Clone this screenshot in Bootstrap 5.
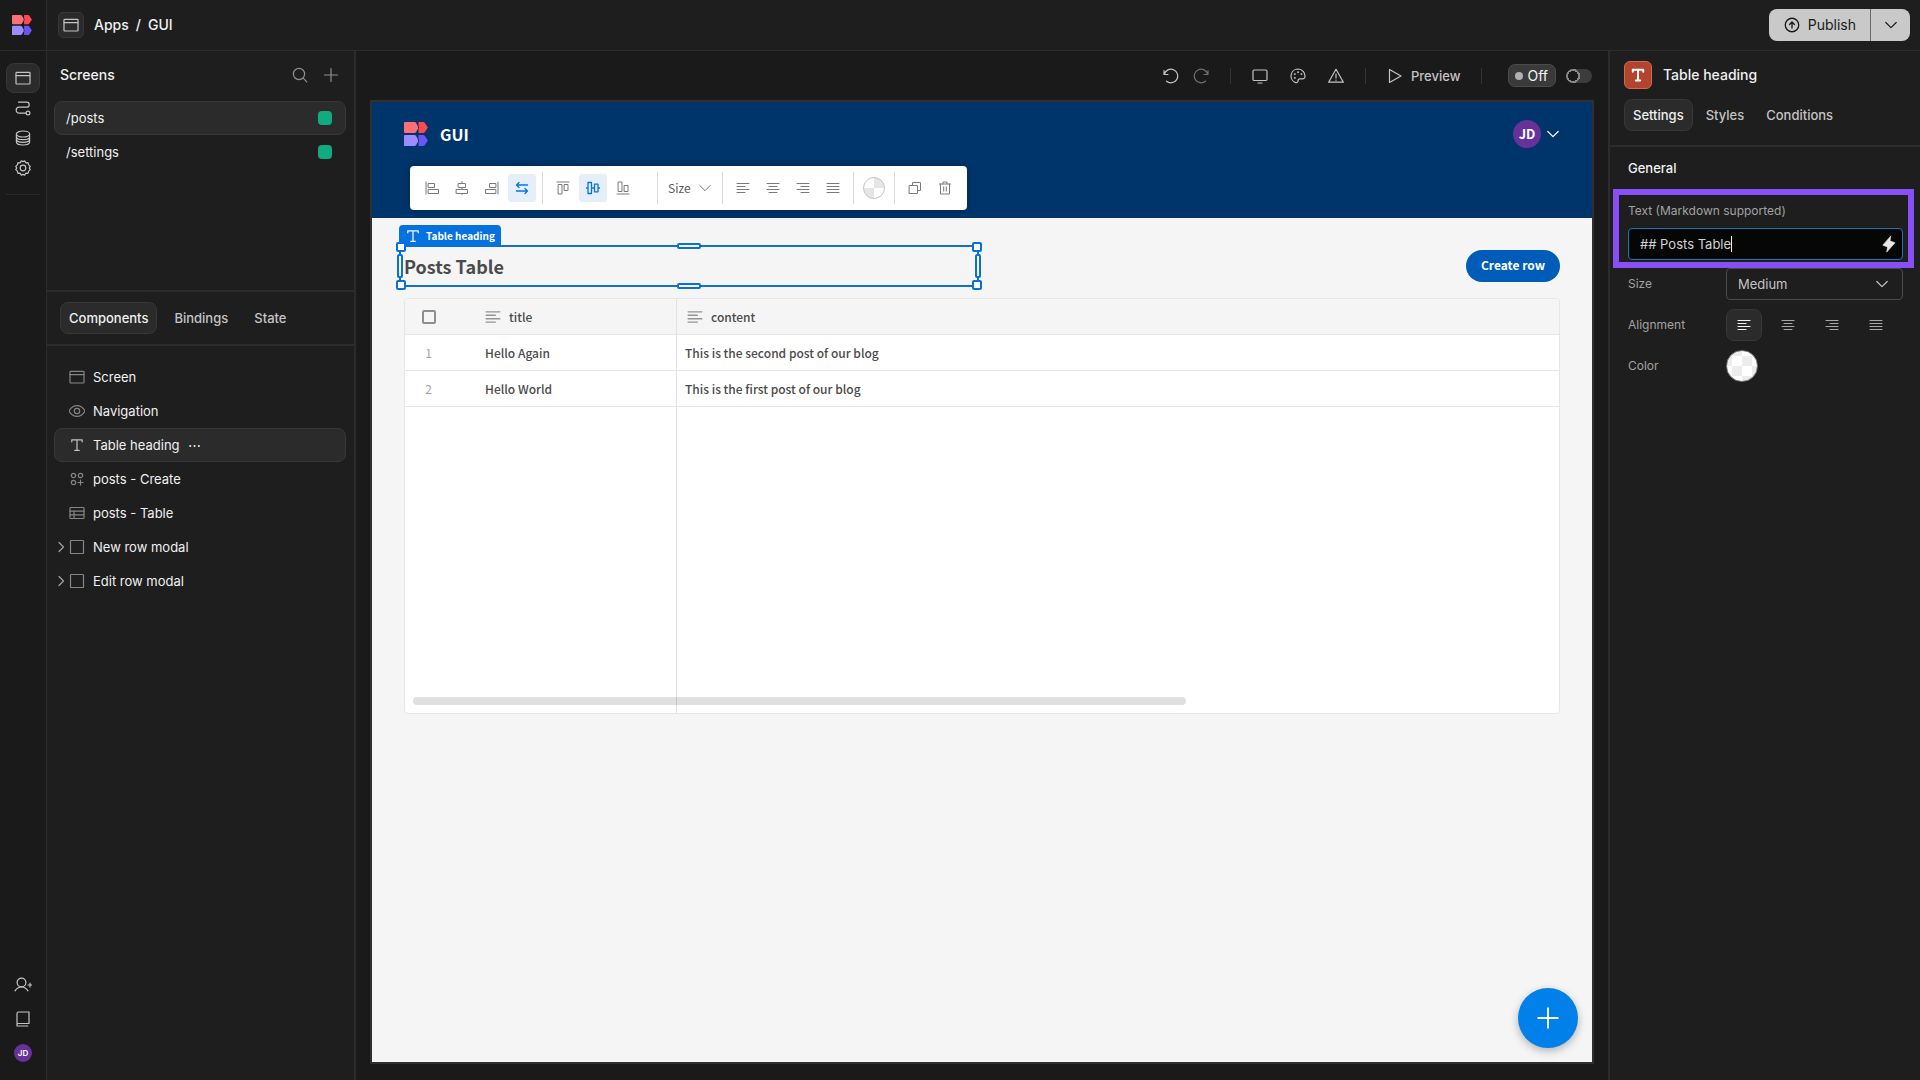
<!DOCTYPE html>
<html lang="en">
<head>
<meta charset="utf-8">
<meta name="viewport" content="width=device-width, initial-scale=1">
<title>GUI – Apps</title>
<link href="https://cdn.jsdelivr.net/npm/bootstrap@5.3.0/dist/css/bootstrap.min.css" rel="stylesheet">
<style>
  :root { --panel:#1e1e1e; --deep:#1a1a1a; --line:#2c2c2c; --raised:#2b2b2b; --edge:#383838; --txt:#f0f0f0; --dim:#c4c4c4; --mute:#a2a2a2; }
  body { font-family:Inter,"Noto Sans",sans-serif; font-size:13px; line-height:20px; color:var(--txt); background:var(--deep); }
  svg { display:block; flex:none; fill:none; stroke:currentColor; stroke-width:1.2; stroke-linecap:round; stroke-linejoin:round; }
  a { color:inherit; text-decoration:none; }
  button { border:0; background:none; color:inherit; padding:0; }
  h1, h2, p { margin:0; font-size:14px; line-height:20px; font-weight:500; }
  .i14 { width:14px; height:14px; } .i16 { width:16px; height:16px; } .i18 { width:18px; height:18px; } .i20 { width:20px; height:20px; } .i24 { width:24px; height:24px; }
  .min-h-0 { min-height:0; }

  .app-head { height:51px; background:var(--panel); border-bottom:1px solid var(--line); font-size:14px; }
  .rail-w { width:47px; border-right:1px solid var(--line); background:var(--deep); flex:none; }
  .crumbs { padding:0 10px 0 11px; }
  .crumb-box { width:26px; height:26px; margin-right:10px; border:1px solid var(--edge); border-radius:5px; background:var(--raised); color:var(--dim); }
  .crumb-sep { padding:0 7px; }
  .publish { height:32px; background:#c9c9c9; color:#1a1a1a; border-radius:8px; overflow:hidden; }
  .publish button + button { border-left:1px solid #6a6a6a; width:40px; }
  .publish button:first-child { padding:0 14px; gap:7px; }

  .rail-nav a { height:30px; width:34px; color:var(--dim); }
  .rail-nav a.active { background:var(--raised); border:1px solid var(--edge); border-radius:8px; }
  .rail-nav hr { width:100%; margin:11px 0 0; border-color:#555; }
  .rail-foot { gap:17px; padding-bottom:18px; color:var(--dim); }
  .ava { border-radius:50%; background:#66329a; color:#fff; font-weight:600; }
  .ava-s { width:18px; height:18px; font-size:8px; line-height:10px; }

  .left-panel { width:309px; flex:none; background:var(--panel); border-right:2px solid var(--line); }
  .screens { height:241px; border-bottom:2px solid var(--line); padding:14px 8px 0 7px; }
  .screens-head { padding:0 7px 16px 6px; gap:15px; color:#909090; }
  .screens-head h2 { color:var(--txt); }
  .rowitem { height:34px; border:1px solid transparent; border-radius:8px; padding:0 13px 0 11px; }
  .rowitem.active { background:var(--raised); border-color:var(--edge); }
  .dot-role { width:14px; height:14px; border-radius:4px; background:#10ab80; }
  .tabset { gap:8px; color:var(--dim); }
  .tabset button { height:32px; padding:0 8px; border:1px solid transparent; border-radius:8px; font-weight:500; }
  .tabset button.active { background:var(--raised); border-color:var(--edge); color:var(--txt); }
  .left-tabs { padding:10px 13px; border-bottom:2px solid var(--line); }
  .tree { padding:14px 8px 0 7px; }
  .tree .rowitem { padding:0 2px; gap:8px; }
  .tree .twist { width:9px; margin-right:-5px; color:var(--mute); }
  .tree .rowitem > svg { color:#858585; }
  .tree .active > svg { color:var(--dim); }

  .stage { padding:0 14px 16px 14px; }
  .stage-bar { height:49px; padding-right:2px; color:var(--dim); }
  .stage-bar .vr-line { width:1px; height:16px; background:#353535; margin:0 21px; }
  .history { gap:14px; } .tools { gap:22px; }
  .off-pill { height:23px; border:1px solid #4b4b4b; border-radius:7px; background:#3a3a3a; padding:0 7px 0 6px; gap:4px; color:#f4f4f4; margin:0 10px 0 5px; font-size:14px; }
  .off-pill i { width:8px; height:8px; border-radius:50%; background:#b0b0b0; }
  .flip { appearance:none; width:26px; height:14px; margin:0; border-radius:7px; background:radial-gradient(circle at 7px 7px,#1a1a1a 5px,#8a8a8a 5px,#8a8a8a 7px,#3c3c3c 7px); }

  .canvas { border:2px solid #303030; background:#f5f5f5; color:#4b4b4b; font-family:"Noto Sans CJK SC","Noto Sans",sans-serif; font-weight:500; font-size:12px; }
  .site-head { height:116px; background:#00356b; color:#fff; padding:18px 32px; }
  .site-id { height:28px; gap:12px; }
  .site-id h1 { font-size:16px; font-weight:700; }
  .site-user { height:28px; gap:5px; }
  .ava-m { width:28px; height:28px; font-size:13px; font-weight:700; }
  .site-body { padding:27px 32px; }
  .float-bar { left:38px; top:64px; height:44px; padding:0 8px; gap:2px; background:#fff; border-radius:4px; color:#7a7a7a; box-shadow:0 0 8px rgba(0,0,0,.3); z-index:3; }
  .float-bar button { width:28px; height:28px; border-radius:3px; }
  .float-bar svg { stroke-width:1; }
  .float-bar .on { background:#e5effa; color:#0b74d9; }
  .float-bar .on svg { stroke-width:1.3; }
  .float-bar .sep { width:1px; height:32px; background:#dcdcdc; margin:0 4px; }
  .float-bar .sep-wide { margin-left:18px; }
  .size-wrap { width:52px; }
  .size-wrap select { appearance:none; border:0; background:none; width:100%; padding:0 4px; font-size:12px; line-height:20px; font-weight:400; color:#5a5a5a; }
  .size-wrap svg { right:4px; top:3px; pointer-events:none; }
  .swatch { border-radius:50%; background:conic-gradient(#e6e6e6 25%,#fff 0 50%,#e6e6e6 0 75%,#fff 0); }
  .swatch-s { width:22px; height:22px; border:1px solid #c4c4c4; }

  .picked { width:580px; height:42px; margin-left:-5px; border:2px solid #1272c8; }
  .picked h2 { font-size:18px; line-height:38px; font-weight:700; padding-left:3px; color:#4b4b4b; }
  .tag { left:-2px; bottom:38px; height:22px; padding:0 6px; gap:5px; background:#0672e0; color:#fff; border-radius:4px 4px 0 0; font-size:10px; font-weight:700; white-space:nowrap; }
  .grip { position:absolute; background:#fff; border:2px solid #0672d8; border-radius:2px; width:10px; height:10px; }
  .g-w, .g-e { width:6px; height:24px; top:7px; } .g-n, .g-s { width:24px; height:6px; left:276px; }
  .g-nw, .g-ne { top:-5px; } .g-sw, .g-se { bottom:-5px; } .g-nw, .g-sw { left:-5px; } .g-ne, .g-se { right:-5px; }
  .g-w { left:-4px; } .g-e { right:-4px; } .g-n { top:-4px; } .g-s { bottom:-4px; }
  .create { height:32px; padding:0 15px 2px; border-radius:16px; background:#005cb9; color:#fff; font-size:12px; font-weight:700; }

  .grid-box { height:416px; margin-top:11px; border:1px solid #e6e6e6; border-radius:4px; background:#fff; overflow:hidden; }
  .grid-box table { width:100%; height:100%; border-collapse:separate; border-spacing:0; table-layout:fixed; }
  .grid-box th, .grid-box td { height:36px; padding:0 8px; border-bottom:1px solid #e6e6e6; font-weight:500; line-height:20px; }
  .grid-box th { background:#f5f5f5; padding:0 10px; }
  .grid-box th svg { color:#949494; }
  .grid-box tr > :nth-child(2) { border-right:1px solid #e2e2e2; padding-left:33px; }
  .grid-box .num { width:47px; color:#a4a4a4; text-align:center; padding:0; font-weight:400; }
  .grid-box .fill td { height:auto; border-bottom:0; }
  .grid-box .ttl { width:225px; }
  .tick { appearance:none; display:block; width:14px; height:14px; margin:0 auto; border:2px solid #8e8e8e; border-radius:2px; }
  .scroller { left:8px; bottom:8px; width:67%; height:8px; border-radius:4px; background:rgba(0,0,0,.12); }
  .fab { right:14px; bottom:14px; width:60px; height:60px; border-radius:50%; background:#0080e8; color:#fff; box-shadow:0 3px 8px rgba(0,0,0,.28); }

  .right-panel { width:312px; flex:none; background:var(--panel); border-left:2px solid var(--line); }
  .insp-head { padding:10px 14px 14px; border-bottom:2px solid var(--line); }
  .insp-title { gap:11px; margin-bottom:10px; }
  .insp-head .tabset { gap:4px; }
  .type-box { width:28px; height:28px; border-radius:6px; background:#b4432d; border:1px solid #cf6a55; color:#fff; }
  .type-box svg { stroke-width:2; }
  .insp-body { padding:11px 17px 0 18px; }
  .insp-body h2 { font-size:13px; }
  .insp-body label, .lbl { font-size:12px; line-height:16px; color:var(--mute); }
  .lbl { width:98px; flex:none; }
  .marked { padding-top:25px; margin-bottom:8px; }
  .marked label { margin-bottom:9px; }
  .marked::after { content:""; position:absolute; left:-15px; right:-11px; top:11px; bottom:-8px; border:6px solid #874ff5; pointer-events:none; z-index:2; }
  .fld { height:32px; width:100%; border-radius:4px; border:1px solid #4a4a4a; background:var(--panel); color:var(--dim); padding:0 11px; appearance:none; outline:0; }
  .fld-on { background:#060606; border-color:#1b75b5; color:#d2d2d2; }
  .caret { left:103px; top:8px; width:1px; height:16px; background:#eee; }
  .bolt { right:5px; top:7px; color:#e8e8e8; } .drop { right:14px; top:9px; color:var(--dim); pointer-events:none; }
  .opt-rows { display:grid; gap:9px; }
  .opt-rows > div { height:32px; }
  .aligns { gap:8px; color:#a8a8a8; }
  .aligns button { width:36px; height:32px; border:1px solid transparent; border-radius:8px; }
  .aligns .active { background:var(--raised); border-color:var(--edge); color:#f4f4f4; }
  .swatch-l { width:32px; height:32px; border:1px solid #777; background:repeating-conic-gradient(#ececec 0 25%,#fff 0 50%) 5px 5px/20px 20px; }
</style>
</head>
<body class="vh-100 d-flex flex-column overflow-hidden">

<svg width="0" height="0" class="position-absolute" aria-hidden="true">
  <symbol id="logo" viewBox="0 0 24 24"><g stroke="none"><path fill="#ff6f76" d="M0 1Q0 0 1 0H10.500Q11.500 0 12 .8L14 4.500V6.500L12 10.200Q11.500 11 10.500 11H1Q0 11 0 10z"/><path fill="#ff4852" d="M14.500 0H19.500Q20.300 0 20.700.7L23.600 5Q24 5.500 23.600 6L20.700 10.300Q20.300 11 19.500 11H14.500V6.800L15.200 5.500L14.500 4.200z"/><path fill="#9b8cff" d="M0 14Q0 13 1 13H10.500Q11.500 13 12 13.800L14 17.500V19.500L12 23.200Q11.500 24 10.500 24H0z"/><path fill="#6a55f5" d="M14.500 13H19.500Q20.300 13 20.700 13.700L23.600 18Q24 18.500 23.600 19L20.700 23.300Q20.300 24 19.500 24H14.500V19.800L15.200 18.500L14.500 17.200z"/></g></symbol>
  <symbol id="win" viewBox="0 0 16 16"><rect x="1" y="2.300" width="14" height="11.700" rx=".8"/><path d="M1 5.600h14"/></symbol>
  <symbol id="flow" viewBox="0 0 16 16"><path d="M3.500 2.200h8.200a2.400 2.400 0 0 1 0 5H4.200a3 3 0 0 0 0 6h6.600"/><circle cx="13" cy="13" r="1.900"/></symbol>
  <symbol id="db" viewBox="0 0 16 16"><ellipse cx="8" cy="4" rx="6.600" ry="3"/><path d="M1.400 4v8c0 1.700 3 3 6.600 3s6.600-1.300 6.600-3V4M1.400 6.700c0 1.700 3 3 6.600 3s6.600-1.300 6.600-3M1.400 9.300c0 1.700 3 3 6.600 3s6.600-1.300 6.600-3"/></symbol>
  <symbol id="gear" viewBox="0 0 16 16"><circle cx="8" cy="8" r="2.800"/><path d="M6.300.9 5.200 2.800 3 2.700 2.300 4.900.8 6.400 1.700 8 .8 9.600 2.300 11.100 3 13.300 5.200 13.200 6.300 15.100 8 14.400 9.700 15.100 10.800 13.200 13 13.300 13.700 11.100 15.200 9.600 14.300 8 15.200 6.400 13.700 4.900 13 2.700 10.800 2.800 9.700.9 8 1.600z"/></symbol>
  <symbol id="useradd" viewBox="0 0 18 18"><circle cx="7.500" cy="6.500" r="4.400"/><path d="M1 14.800Q3.500 11 7.500 11T14 14.800M14 9h4M16 7v4"/></symbol>
  <symbol id="book" viewBox="0 0 16 16"><path d="M2 13.500V2.500Q2 1 3.500 1H14v11.500H3.200Q2 12.500 2 14v1h10.800"/></symbol>
  <symbol id="find" viewBox="0 0 16 16"><circle cx="7" cy="7" r="5.600"/><path d="m11.200 11.200 3.600 3.600"/></symbol>
  <symbol id="plus" viewBox="0 0 16 16"><path d="M8 1.500v13M1.500 8h13"/></symbol>
  <symbol id="eye" viewBox="0 0 16 16"><path d="M0 8Q3 2.700 8 2.700T16 8Q13 13.300 8 13.300T0 8z"/><circle cx="8" cy="8" r="2.700"/></symbol>
  <symbol id="tee" viewBox="0 0 16 16"><path d="M2.800 4.800V2.800h10.400v2M8 2.800v10.600M5.800 13.400h4.400"/></symbol>
  <symbol id="shapes" viewBox="0 0 16 16"><circle cx="4.500" cy="4.500" r="2.200"/><circle cx="11.500" cy="4.500" r="2.200"/><circle cx="4.500" cy="11.500" r="2.200"/><path d="M11.500 9v5M9 11.500h5"/></symbol>
  <symbol id="tbl" viewBox="0 0 16 16"><rect x="1" y="2.500" width="14" height="11" rx=".8"/><path d="M1 6.200h14M1 9.800h14M5 6.200v7.300"/></symbol>
  <symbol id="sq" viewBox="0 0 16 16"><rect x="1.500" y="1.500" width="13" height="13" rx=".6"/></symbol>
  <symbol id="right" viewBox="0 0 8 12"><path d="m2 1.500 4.500 4.500L2 10.500"/></symbol>
  <symbol id="down" viewBox="0 0 14 14"><path d="m1.800 4.500 5.200 5.200 5.200-5.200"/></symbol>
  <symbol id="undo" viewBox="0 0 16 16"><path d="M1 2.500v4h4M1.300 6.300A6.800 6.800 0 1 1 3.500 13.200"/></symbol>
  <symbol id="desk" viewBox="0 0 16 16"><rect x="1" y="2" width="14" height="10.500" rx="1.200"/><path d="M6 15h4"/></symbol>
  <symbol id="pal" viewBox="0 0 16 16"><path d="M8 1a7 7 0 0 0-2.300 13.600c1.300.4 2.300-.5 2.300-1.700a2 2 0 0 1 2-2h2.700c1 0 1.800-.6 2.100-1.500A7 7 0 0 0 8 1z"/><g fill="currentColor" stroke-width=".6"><circle cx="8" cy="4.200" r=".6"/><circle cx="4.700" cy="6.100" r=".6"/><circle cx="4.700" cy="9.900" r=".6"/><circle cx="11.300" cy="6.100" r=".6"/></g></symbol>
  <symbol id="warn" viewBox="0 0 16 16"><path d="M8 1.200 15.400 14.200H.6zM8 6v4M8 12v.2"/></symbol>
  <symbol id="play" viewBox="0 0 16 16"><path d="M2.500 1.500v13L14 8z"/></symbol>
  <symbol id="up" viewBox="0 0 16 16"><circle cx="8" cy="8" r="6"/><path d="M8 10.700V5.500M5.800 7.500 8 5.300l2.200 2.200"/></symbol>
  <symbol id="bolt" viewBox="0 0 16 16"><path fill="currentColor" stroke-width=".6" d="M9.500 1 2.500 9l4.200 1.600L6 15.200l7.300-8.300-4.300-1.600z"/></symbol>
  <symbol id="al" viewBox="0 0 14 14"><path d="M1 2.500h12M1 5.500h8M1 8.500h12M1 11.500h8"/></symbol>
  <symbol id="ac" viewBox="0 0 14 14"><path d="M1 2.500h12M3 5.500h8M1 8.500h12M3 11.500h8"/></symbol>
  <symbol id="ar" viewBox="0 0 14 14"><path d="M1 2.500h12M5 5.500h8M1 8.500h12M5 11.500h8"/></symbol>
  <symbol id="aj" viewBox="0 0 14 14"><path d="M1 2.500h12M1 5.500h12M1 8.500h12M1 11.500h12"/></symbol>
  <symbol id="hl" viewBox="0 0 14 14"><path d="M1 1v12M3.500 2.500h6v4h-6zM3.500 8.500h10v4h-10z"/></symbol>
  <symbol id="hc" viewBox="0 0 14 14"><path d="M7 .5v2M7 6.500v2M7 12.500v1M3.500 2.500h7v4h-7zM1.500 8.500h11v4h-11z"/></symbol>
  <symbol id="swap" viewBox="0 0 14 14"><path d="M1.500 4h11M4 1.500 1.500 4 4 6.500M1.500 10h11M10 7.500l2.500 2.500-2.500 2.500"/></symbol>
  <symbol id="vt" viewBox="0 0 14 14"><path d="M1 1h12M2.500 3.500h3.500v9.500H2.500zM8.500 3.500H12v6H8.500z"/></symbol>
  <symbol id="vc" viewBox="0 0 14 14"><path d="M.5 7h1.500M5.500 7h3M12 7h1.500M2 1.500h3.500v11H2zM8.500 3.200H12v7.600H8.500z"/></symbol>
  <symbol id="vb" viewBox="0 0 14 14"><path d="M1 13h12M2.500 1H6v9.500H2.500zM8.500 4.500H12v6H8.500z"/></symbol>
  <symbol id="copy" viewBox="0 0 14 14"><path d="M4.500 4.500v-3h8v8h-3M1.500 4.500h8v8h-8z"/></symbol>
  <symbol id="bin" viewBox="0 0 14 14"><path d="M1.500 3h11M2.500 3v10h9V3M5 3V1h4v2M5.700 5.800v4.400M8.300 5.800v4.400"/></symbol>
</svg>

<header class="app-head d-flex flex-none">
  <a href="#" class="rail-w d-flex align-items-center ps-2" aria-label="Home"><svg class="i20 ms-1"><use href="#logo"/></svg></a>
  <nav class="crumbs d-flex align-items-center flex-grow-1 fw-medium" aria-label="Breadcrumb">
    <span class="crumb-box d-flex align-items-center justify-content-center"><svg class="i16"><use href="#win"/></svg></span>
    <a href="#">Apps</a><span class="crumb-sep">/</span><a href="#">GUI</a>
    <div class="publish d-flex ms-auto">
      <button class="d-flex align-items-center"><svg class="i18"><use href="#up"/></svg>Publish</button>
      <button class="d-flex align-items-center justify-content-center" aria-label="More"><svg class="i14"><use href="#down"/></svg></button>
    </div>
  </nav>
</header>

<div class="d-flex flex-grow-1 min-h-0">
  <aside class="rail-w d-flex flex-column align-items-center justify-content-between">
    <nav class="rail-nav d-flex flex-column align-items-center pt-2 mt-1">
      <a href="#" class="active d-flex align-items-center justify-content-center" aria-label="Design"><svg class="i16"><use href="#win"/></svg></a>
      <a href="#" class="d-flex align-items-center justify-content-center" aria-label="Automations"><svg class="i16"><use href="#flow"/></svg></a>
      <a href="#" class="d-flex align-items-center justify-content-center" aria-label="Data"><svg class="i16"><use href="#db"/></svg></a>
      <a href="#" class="d-flex align-items-center justify-content-center" aria-label="Settings"><svg class="i16"><use href="#gear"/></svg></a>
      <hr>
    </nav>
    <div class="rail-foot d-flex flex-column align-items-center">
      <button aria-label="Invite"><svg class="i18"><use href="#useradd"/></svg></button>
      <button aria-label="Docs"><svg class="i16"><use href="#book"/></svg></button>
      <button class="ava ava-s d-flex align-items-center justify-content-center">JD</button>
    </div>
  </aside>

  <aside class="left-panel">
    <section class="screens">
      <div class="screens-head d-flex align-items-center">
        <h2 class="flex-grow-1">Screens</h2>
        <button aria-label="Search"><svg class="i16"><use href="#find"/></svg></button>
        <button aria-label="Add"><svg class="i16"><use href="#plus"/></svg></button>
      </div>
      <a href="#" class="rowitem active d-flex align-items-center justify-content-between">/posts<span class="dot-role"></span></a>
      <a href="#" class="rowitem d-flex align-items-center justify-content-between">/settings<span class="dot-role"></span></a>
    </section>
    <div class="tabset left-tabs d-flex"><button class="active">Components</button><button>Bindings</button><button>State</button></div>
    <nav class="tree">
      <a href="#" class="rowitem d-flex align-items-center"><span class="twist"></span><svg class="i16"><use href="#win"/></svg>Screen</a>
      <a href="#" class="rowitem d-flex align-items-center"><span class="twist"></span><svg class="i16"><use href="#eye"/></svg>Navigation</a>
      <a href="#" class="rowitem active d-flex align-items-center"><span class="twist"></span><svg class="i16"><use href="#tee"/></svg>Table heading <span>⋯</span></a>
      <a href="#" class="rowitem d-flex align-items-center"><span class="twist"></span><svg class="i16"><use href="#shapes"/></svg>posts - Create</a>
      <a href="#" class="rowitem d-flex align-items-center"><span class="twist"></span><svg class="i16"><use href="#tbl"/></svg>posts - Table</a>
      <a href="#" class="rowitem d-flex align-items-center"><span class="twist"><svg width="8" height="12"><use href="#right"/></svg></span><svg class="i16"><use href="#sq"/></svg>New row modal</a>
      <a href="#" class="rowitem d-flex align-items-center"><span class="twist"><svg width="8" height="12"><use href="#right"/></svg></span><svg class="i16"><use href="#sq"/></svg>Edit row modal</a>
    </nav>
  </aside>

  <main class="stage flex-grow-1 d-flex flex-column">
    <div class="stage-bar d-flex align-items-center justify-content-end">
      <div class="history d-flex">
        <button aria-label="Undo"><svg class="i16"><use href="#undo"/></svg></button>
        <button aria-label="Redo" class="opacity-50"><svg class="i16" viewBox="0 0 16 16"><use href="#undo" transform="matrix(-1 0 0 1 16 0)"/></svg></button>
      </div>
      <span class="vr-line"></span>
      <div class="tools d-flex">
        <button aria-label="Desktop"><svg class="i16"><use href="#desk"/></svg></button>
        <button aria-label="Theme"><svg class="i16"><use href="#pal"/></svg></button>
        <button aria-label="Errors"><svg class="i16"><use href="#warn"/></svg></button>
      </div>
      <span class="vr-line"></span>
      <button class="d-flex align-items-center gap-2 fw-medium"><svg class="i16"><use href="#play"/></svg>Preview</button>
      <span class="vr-line"></span>
      <label for="live" class="off-pill d-flex align-items-center"><i></i>Off</label>
      <input type="checkbox" id="live" class="flip">
    </div>

    <div class="canvas flex-grow-1 position-relative">
      <div class="site-head d-flex align-items-start justify-content-between">
        <div class="site-id d-flex align-items-center"><svg class="i24"><use href="#logo"/></svg><h1>GUI</h1></div>
        <div class="site-user d-flex align-items-center">
          <button class="ava ava-m d-flex align-items-center justify-content-center">JD</button>
          <svg class="i14"><use href="#down"/></svg>
        </div>
      </div>
      <div class="float-bar position-absolute d-flex align-items-center" role="toolbar">
        <button class="d-flex align-items-center justify-content-center" aria-label="Left"><svg class="i14"><use href="#hl"/></svg></button>
        <button class="d-flex align-items-center justify-content-center" aria-label="Centre"><svg class="i14"><use href="#hc"/></svg></button>
        <button class="d-flex align-items-center justify-content-center" aria-label="Right"><svg class="i14" viewBox="0 0 14 14"><use href="#hl" transform="matrix(-1 0 0 1 14 0)"/></svg></button>
        <button class="on d-flex align-items-center justify-content-center" aria-label="Stretch"><svg class="i14"><use href="#swap"/></svg></button>
        <span class="sep"></span>
        <button class="d-flex align-items-center justify-content-center" aria-label="Top"><svg class="i14"><use href="#vt"/></svg></button>
        <button class="on d-flex align-items-center justify-content-center" aria-label="Middle"><svg class="i14"><use href="#vc"/></svg></button>
        <button class="d-flex align-items-center justify-content-center" aria-label="Bottom"><svg class="i14"><use href="#vb"/></svg></button>
        <span class="sep sep-wide"></span>
        <div class="size-wrap position-relative"><select aria-label="Size"><option>Size</option></select><svg class="i14 position-absolute"><use href="#down"/></svg></div>
        <span class="sep"></span>
        <button class="d-flex align-items-center justify-content-center" aria-label="Text left"><svg class="i14"><use href="#al"/></svg></button>
        <button class="d-flex align-items-center justify-content-center" aria-label="Text centre"><svg class="i14"><use href="#ac"/></svg></button>
        <button class="d-flex align-items-center justify-content-center" aria-label="Text right"><svg class="i14"><use href="#ar"/></svg></button>
        <button class="d-flex align-items-center justify-content-center" aria-label="Justify"><svg class="i14"><use href="#aj"/></svg></button>
        <span class="sep"></span>
        <button class="d-flex align-items-center justify-content-center" aria-label="Colour"><span class="swatch swatch-s"></span></button>
        <span class="sep"></span>
        <button class="d-flex align-items-center justify-content-center" aria-label="Duplicate"><svg class="i14"><use href="#copy"/></svg></button>
        <button class="d-flex align-items-center justify-content-center" aria-label="Delete"><svg class="i14"><use href="#bin"/></svg></button>
      </div>

      <div class="site-body">
        <div class="d-flex justify-content-between align-items-center">
          <div class="picked position-relative">
            <span class="tag position-absolute d-flex align-items-center"><svg class="i16"><use href="#tee"/></svg>Table heading</span>
            <h2>Posts Table</h2>
            <i class="grip g-n"></i><i class="grip g-s"></i><i class="grip g-w"></i><i class="grip g-e"></i>
            <i class="grip g-nw"></i><i class="grip g-ne"></i><i class="grip g-sw"></i><i class="grip g-se"></i>
          </div>
          <button class="create">Create row</button>
        </div>
        <div class="grid-box position-relative">
          <table>
            <thead><tr><th class="num"><input type="checkbox" class="tick" aria-label="Select all"></th>
              <th class="ttl"><span class="d-flex align-items-center gap-2"><svg class="i16" viewBox="0 0 14 14"><use href="#al"/></svg>title</span></th>
              <th><span class="d-flex align-items-center gap-2"><svg class="i16" viewBox="0 0 14 14"><use href="#al"/></svg>content</span></th></tr></thead>
            <tbody>
              <tr><td class="num">1</td><td>Hello Again</td><td>This is the second post of our blog</td></tr>
              <tr><td class="num">2</td><td>Hello World</td><td>This is the first post of our blog</td></tr>
              <tr class="fill"><td></td><td></td><td></td></tr>
            </tbody>
          </table>
          <div class="scroller position-absolute"></div>
        </div>
      </div>
      <button class="fab position-absolute d-flex align-items-center justify-content-center" aria-label="Add component"><svg class="i24"><use href="#plus"/></svg></button>
    </div>
  </main>

  <aside class="right-panel">
    <div class="insp-head">
      <div class="insp-title d-flex align-items-center">
        <span class="type-box d-flex align-items-center justify-content-center"><svg class="i16"><use href="#tee"/></svg></span>
        <h2>Table heading</h2>
      </div>
      <div class="tabset d-flex"><button class="active">Settings</button><button>Styles</button><button>Conditions</button></div>
    </div>
    <div class="insp-body">
      <h2>General</h2>
      <div class="marked position-relative">
        <label for="md" class="d-block">Text (Markdown supported)</label>
        <div class="position-relative">
          <input id="md" class="fld fld-on" value="## Posts Table">
          <span class="caret position-absolute"></span>
          <button class="bolt position-absolute" aria-label="Bindings"><svg class="i18"><use href="#bolt"/></svg></button>
        </div>
      </div>
      <div class="opt-rows">
        <div class="d-flex align-items-center"><label for="sz" class="lbl">Size</label>
          <div class="position-relative flex-grow-1"><select id="sz" class="fld"><option>Medium</option></select><svg class="i14 drop position-absolute"><use href="#down"/></svg></div></div>
        <div class="d-flex align-items-center"><span class="lbl">Alignment</span>
          <div class="aligns d-flex" role="group" aria-label="Alignment">
            <button class="active d-flex align-items-center justify-content-center" aria-label="Left"><svg class="i14"><use href="#al"/></svg></button>
            <button class="d-flex align-items-center justify-content-center" aria-label="Centre"><svg class="i14"><use href="#ac"/></svg></button>
            <button class="d-flex align-items-center justify-content-center" aria-label="Right"><svg class="i14"><use href="#ar"/></svg></button>
            <button class="d-flex align-items-center justify-content-center" aria-label="Justify"><svg class="i14"><use href="#aj"/></svg></button>
          </div></div>
        <div class="d-flex align-items-center"><span class="lbl">Color</span><button class="swatch swatch-l" aria-label="Color"></button></div>
      </div>
    </div>
  </aside>
</div>
<script src="https://cdn.jsdelivr.net/npm/bootstrap@5.3.0/dist/js/bootstrap.bundle.min.js"></script>
</body>
</html>
